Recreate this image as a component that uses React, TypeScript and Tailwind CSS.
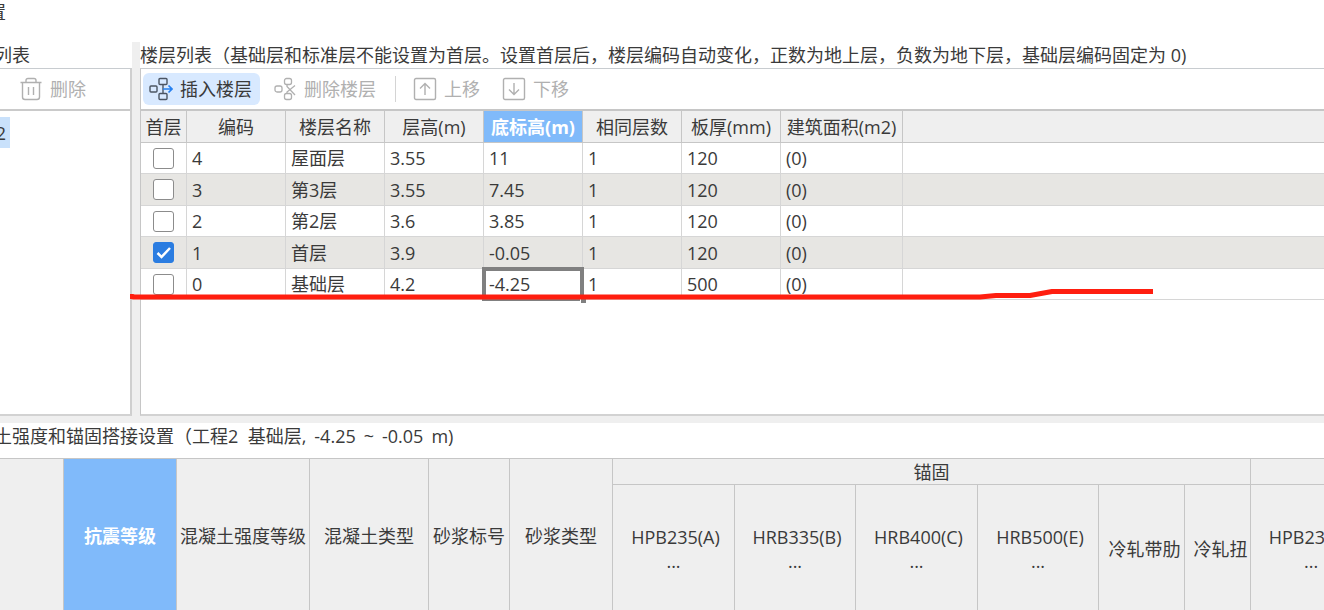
import React from 'react';

interface Floor {
  code: string;
  name: string;
  height: string;
  bottom: string;
  count: string;
  slab: string;
  area: string;
  first?: boolean;
}

const floors: Floor[] = [
  { code: '4', name: '屋面层', height: '3.55', bottom: '11', count: '1', slab: '120', area: '(0)' },
  { code: '3', name: '第3层', height: '3.55', bottom: '7.45', count: '1', slab: '120', area: '(0)' },
  { code: '2', name: '第2层', height: '3.6', bottom: '3.85', count: '1', slab: '120', area: '(0)' },
  { code: '1', name: '首层', height: '3.9', bottom: '-0.05', count: '1', slab: '120', area: '(0)', first: true },
  { code: '0', name: '基础层', height: '4.2', bottom: '-4.25', count: '1', slab: '500', area: '(0)' },
];

const floorColumns = ['首层', '编码', '楼层名称', '层高(m)', '底标高(m)', '相同层数', '板厚(mm)', '建筑面积(m2)'];
const settingColumns = ['抗震等级', '混凝土强度等级', '混凝土类型', '砂浆标号', '砂浆类型'];
const steelColumns = ['HPB235(A)', 'HRB335(B)', 'HRB400(C)', 'HRB500(E)', '冷轧带肋', '冷轧扭', 'HPB235(A)'];

const TrashIcon = () => (
  <svg width="22" height="24" viewBox="0 0 22 24" fill="none" stroke="currentColor" strokeWidth="1.4" aria-hidden="true">
    <path d="M0.5 5.5H21.5M6 5.5V3.5Q6 1.5 8 1.5H14Q16 1.5 16 3.5V5.5M2.5 5.5V20Q2.5 22.5 5 22.5H17Q19.5 22.5 19.5 20V5.5M8.5 10V18M13.5 10V18" />
  </svg>
);

const InsertIcon = () => (
  <svg width="24" height="24" viewBox="0 0 24 24" fill="none" stroke="#4b5563" strokeWidth="1.4" aria-hidden="true">
    <rect x="1" y="9" width="7" height="6" rx="1" />
    <rect x="10" y="1.5" width="8" height="6" rx="1" />
    <rect x="10" y="16.5" width="8" height="6" rx="1" />
    <path d="M14 7.5V16.5" />
    <path d="M14 12H23M19.5 8.5L23 12L19.5 15.5" stroke="#2680f0" strokeWidth="1.7" />
  </svg>
);

const RemoveIcon = () => (
  <svg width="24" height="24" viewBox="0 0 24 24" fill="none" stroke="currentColor" strokeWidth="1.3" aria-hidden="true">
    <rect x="1" y="9" width="7" height="6" rx="2" />
    <rect x="10.5" y="1.5" width="7" height="6" rx="2" />
    <rect x="10.5" y="16.5" width="7" height="6" rx="2" />
    <path d="M13 7.5V9.5L21 18M21 8.5L13 15V16.5" />
  </svg>
);

const MoveIcon = ({ down = false }: { down?: boolean }) => (
  <svg width="24" height="24" viewBox="0 0 24 24" fill="none" stroke="currentColor" strokeWidth="1.4" aria-hidden="true">
    <rect x="1.5" y="1.5" width="21" height="21" rx="1.5" />
    <path d={down ? 'M12 6V17.5M7 12.5L12 17.5L17 12.5' : 'M12 18V6.5M7 11.5L12 6.5L17 11.5'} />
  </svg>
);

const FloorTable = () => (
  <table className="w-full table-fixed border-separate border-spacing-0 text-left">
    <colgroup>
      <col className="w-[46px]" />
      <col className="w-[99px]" />
      <col className="w-[99px]" />
      <col className="w-[99px]" />
      <col className="w-[99px]" />
      <col className="w-[99px]" />
      <col className="w-[99px]" />
      <col className="w-[122px]" />
      <col />
    </colgroup>
    <thead>
      <tr className="h-8 bg-[#efefef]">
        {floorColumns.map((label) => (
          <th
            key={label}
            scope="col"
            className={`border-r border-b border-[#c6c6c6] p-0 text-center ${
              label === '底标高(m)' ? 'bg-[#80bafa] font-bold text-white' : 'font-normal'
            }`}
          >
            {label}
          </th>
        ))}
        <td className="border-b border-[#c6c6c6]"></td>
      </tr>
    </thead>
    <tbody>
      {floors.map((floor) => (
        <tr key={floor.code} className="h-[31px] even:h-8 even:bg-[#e7e6e3] [&>td]:border-b [&>td]:border-[#d6d6d6] [&>td]:py-0 [&>td]:pr-0 [&>td]:pl-[5px] [&>td:not(:last-child)]:border-r">
          <td>
            <input
              type="checkbox"
              aria-label={`首层 ${floor.name}`}
              defaultChecked={floor.first}
              className="peer ml-[7px] block size-[21px] appearance-none rounded-[3px] border border-[#8c8c8c] bg-white checked:border-[#2b7de1] checked:bg-[#2b7de1]"
            />
            <svg className="pointer-events-none -mt-[21px] ml-[7px] hidden size-[21px] peer-checked:block" viewBox="0 0 21 21" fill="none" stroke="#fff" strokeWidth="2.5" aria-hidden="true">
              <path d="M4.5 11L8.5 15L17 6" />
            </svg>
          </td>
          <td>{floor.code}</td>
          <td>{floor.name}</td>
          <td>{floor.height}</td>
          <td className="relative">
            {floor.bottom}
            {floor.code === '0' && (
              <span className="absolute -inset-x-0.5 -top-0.5 -bottom-0.5 border-4 border-[#808080]">
                <span className="absolute -right-1.5 -bottom-1.5 size-1.5 border-t border-l border-white bg-[#808080]"></span>
              </span>
            )}
          </td>
          <td>{floor.count}</td>
          <td>{floor.slab}</td>
          <td>{floor.area}</td>
          <td></td>
        </tr>
      ))}
    </tbody>
  </table>
);

const StrengthTable = () => (
  <table className="w-full min-w-[1372px] table-fixed border-separate border-spacing-0 border-t border-[#c6c6c6] bg-[#efefef] [&_th]:border-r [&_th]:border-[#c6c6c6] [&_th]:p-0">
    <colgroup>
      <col className="w-16" />
      <col className="w-[113px]" />
      <col className="w-[133px]" />
      <col className="w-[119px]" />
      <col className="w-[81px]" />
      <col className="w-[103px]" />
      <col className="w-[122px]" />
      <col className="w-[121px]" />
      <col className="w-[122px]" />
      <col className="w-[121px]" />
      <col className="w-[86px]" />
      <col className="w-[66px]" />
      <col className="w-[121px]" />
    </colgroup>
    <thead>
      <tr className="h-[26px]">
        <th rowSpan={2}></th>
        {settingColumns.map((label, i) => (
          <th
            key={label}
            rowSpan={2}
            scope="col"
            className={i === 0 ? 'bg-[#80bafa] font-bold text-white' : 'font-normal'}
          >
            {label}
          </th>
        ))}
        <th colSpan={6} scope="colgroup" className="border-b font-normal">锚固</th>
        <th className="border-b"></th>
      </tr>
      <tr className="h-[127px]">
        {steelColumns.map((label, i) => (
          <th key={i} scope="col" className="font-normal">
            {label.startsWith('H') ? (
              <>
                <span className="block pl-1">{label}</span>
                <span className="block">...</span>
              </>
            ) : (
              <span className="block pl-1.5">{label}</span>
            )}
          </th>
        ))}
      </tr>
    </thead>
  </table>
);

export default function App() {
  return (
    <div className="relative h-screen overflow-hidden bg-white font-['Open_Sans','Noto_Sans_CJK_SC',sans-serif] text-[18px] leading-6 whitespace-nowrap text-[#3a3a3a]">
      <header className="h-[42px]">
        <h1 className="-ml-3">置</h1>
      </header>

      <main>
        <div className="flex h-[381px] bg-[#efefef] pb-[7px]">
          <aside className="flex w-[132px] shrink-0 flex-col bg-white">
            <h2 className="h-[26px] pt-px"><span className="-ml-1.5">列表</span></h2>
            <div className="flex flex-1 flex-col border-t border-r-2 border-b-2 border-t-[#c8ccd0] border-r-[#cfcfcf] border-b-[#d2d2d2]">
              <div className="flex h-[42px] items-center border-b-2 border-[#cacaca] pl-5 text-[#b0b0b0]">
                <button type="button" disabled className="flex items-center gap-2">
                  <TrashIcon />
                  删除
                </button>
              </div>
              <div className="mt-1.5 flex h-[31px] w-2.5 items-center justify-end overflow-hidden bg-[#c9e1fb] pr-1">工程2</div>
            </div>
          </aside>

          <section className="ml-2 flex min-w-0 flex-1 flex-col bg-white">
            <h2 className="h-[26px] bg-white pt-px">
              楼层列表（基础层和标准层不能设置为首层。设置首层后，楼层编码自动变化，正数为地上层，负数为地下层，基础层编码固定为 0)
            </h2>
            <div className="flex-1 border-t border-b-2 border-l border-t-[#c8ccd0] border-b-[#d2d2d2] border-l-[#c6c6c6]">
              <div className="flex h-[42px] items-center border-b-2 border-[#c6c6c6] pl-0.5 text-[#b0b0b0]">
                <button type="button" className="flex h-8 items-center gap-[7px] rounded-md bg-[#d8e9ff] pr-2 pl-1.5 text-[#3a3a3a]">
                  <InsertIcon />
                  插入楼层
                </button>
                <button type="button" disabled className="ml-3.5 flex items-center gap-1.5">
                  <RemoveIcon />
                  删除楼层
                </button>
                <span className="ml-[19px] h-[26px] w-px bg-[#d4d4d4]"></span>
                <button type="button" disabled className="ml-[17px] flex items-center gap-[7px]">
                  <MoveIcon />
                  上移
                </button>
                <button type="button" disabled className="ml-[22px] flex items-center gap-[7px]">
                  <MoveIcon down />
                  下移
                </button>
              </div>
              <FloorTable />
            </div>
          </section>
        </div>

        <section>
          <h2 className="flex h-[35px] gap-2 pt-px">
            <span className="-ml-1.5 whitespace-pre">土强度和锚固搭接设置（工程2  基础层,</span>
            <span>-4.25</span>
            <span>~</span>
            <span>-0.05</span>
            <span>m)</span>
          </h2>
          <StrengthTable />
        </section>
      </main>

      {/* red pen mark under the foundation floor */}
      <svg className="pointer-events-none absolute top-[284px] left-[130px]" width="1026" height="20" viewBox="0 0 1026 20" fill="none" stroke="#ff1e0f" strokeWidth="5" strokeLinejoin="round" aria-hidden="true">
        <path d="M0 12.5H3V13H850L866 11.5H900L922 7.5H1023" />
      </svg>
    </div>
  );
}
